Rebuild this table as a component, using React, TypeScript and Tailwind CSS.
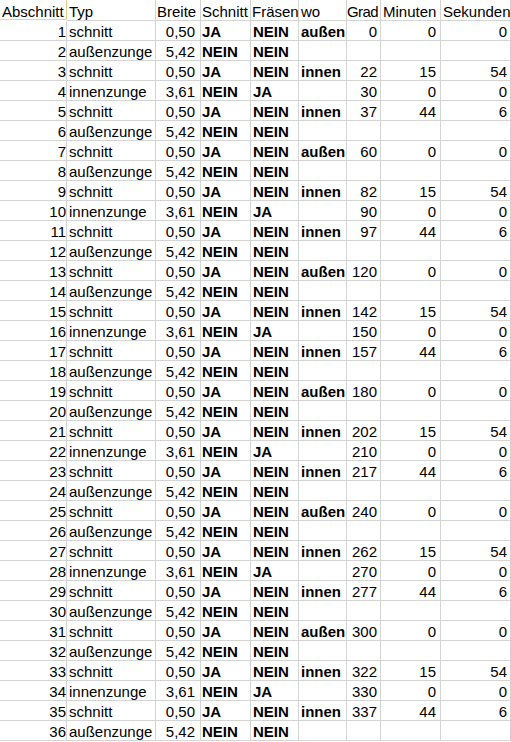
import React from "react";

type Row = {
  nr: number;
  typ: string;
  breite: string;
  schnitt: string;
  fraesen: string;
  wo?: string;
  grad?: number;
  min?: number;
  sek?: number;
};

// one 60° block repeats six times
const block = [
  { typ: "schnitt", wo: "außen", grad: 0, min: 0, sek: 0 },
  { typ: "außenzunge" },
  { typ: "schnitt", wo: "innen", grad: 22, min: 15, sek: 54 },
  { typ: "innenzunge", grad: 30, min: 0, sek: 0 },
  { typ: "schnitt", wo: "innen", grad: 37, min: 44, sek: 6 },
  { typ: "außenzunge" },
];

const rows: Row[] = Array.from({ length: 36 }, (_, i) => {
  const b = block[i % 6];
  const off = Math.floor(i / 6) * 60;
  const isCut = b.typ === "schnitt";
  return {
    nr: i + 1,
    typ: b.typ,
    breite: isCut ? "0,50" : b.typ === "innenzunge" ? "3,61" : "5,42",
    schnitt: isCut ? "JA" : "NEIN",
    fraesen: b.typ === "innenzunge" ? "JA" : "NEIN",
    wo: b.wo,
    grad: b.grad !== undefined ? b.grad + off : undefined,
    min: b.min,
    sek: b.sek,
  };
});

const cell = "h-[20px] border-r border-b border-[#d4d4d4] pt-[3px] leading-[16px] whitespace-nowrap overflow-hidden";
const head = "h-[21px] border-r border-b border-[#d4d4d4] pt-[4px] leading-[16px] whitespace-nowrap overflow-visible";

export default function App() {
  return (
    <div className="w-[511px] h-[742px] bg-white font-['Liberation_Sans',Arial,sans-serif] text-[15px] text-black overflow-hidden">
      <div className="grid grid-cols-[67px_89px_45px_50px_48px_48px_34px_60px_70px]">
        <div className={`${head} pl-[2px] border-t border-t-[#f3e3b8] border-r-[#e6cf8c] -mt-px`}>Abschnitt</div>
        <div className={`${head} pl-[2px]`}>Typ</div>
        <div className={`${head} pl-[1px]`}>Breite</div>
        <div className={`${head} pl-[1px]`}>Schnitt</div>
        <div className={`${head} pl-[1px]`}>Fräsen</div>
        <div className={`${head} pl-[2px]`}>wo</div>
        <div className={`${head} pl-0 tracking-[-0.6px]`}>Grad</div>
        <div className={`${head} pl-[2px]`}>Minuten</div>
        <div className={`${head} pl-[2px]`}>Sekunden</div>

        {rows.map((r) => (
          <React.Fragment key={r.nr}>
            <div className={`${cell} text-right pr-[0px]`}>{r.nr}</div>
            <div className={`${cell} pl-[2px]`}>{r.typ}</div>
            <div className={`${cell} text-right pr-[5px]`}>{r.breite}</div>
            <div className={`${cell} pl-[1px] font-bold`}>{r.schnitt}</div>
            <div className={`${cell} pl-[2px] font-bold`}>{r.fraesen}</div>
            <div className={`${cell} pl-[2px] font-bold`}>{r.wo ?? ""}</div>
            <div className={`${cell} text-right pr-[3px]`}>{r.grad ?? ""}</div>
            <div className={`${cell} text-right pr-[4px]`}>{r.min ?? ""}</div>
            <div className={`${cell} text-right pr-[3px]`}>{r.sek ?? ""}</div>
          </React.Fragment>
        ))}
      </div>
    </div>
  );
}
